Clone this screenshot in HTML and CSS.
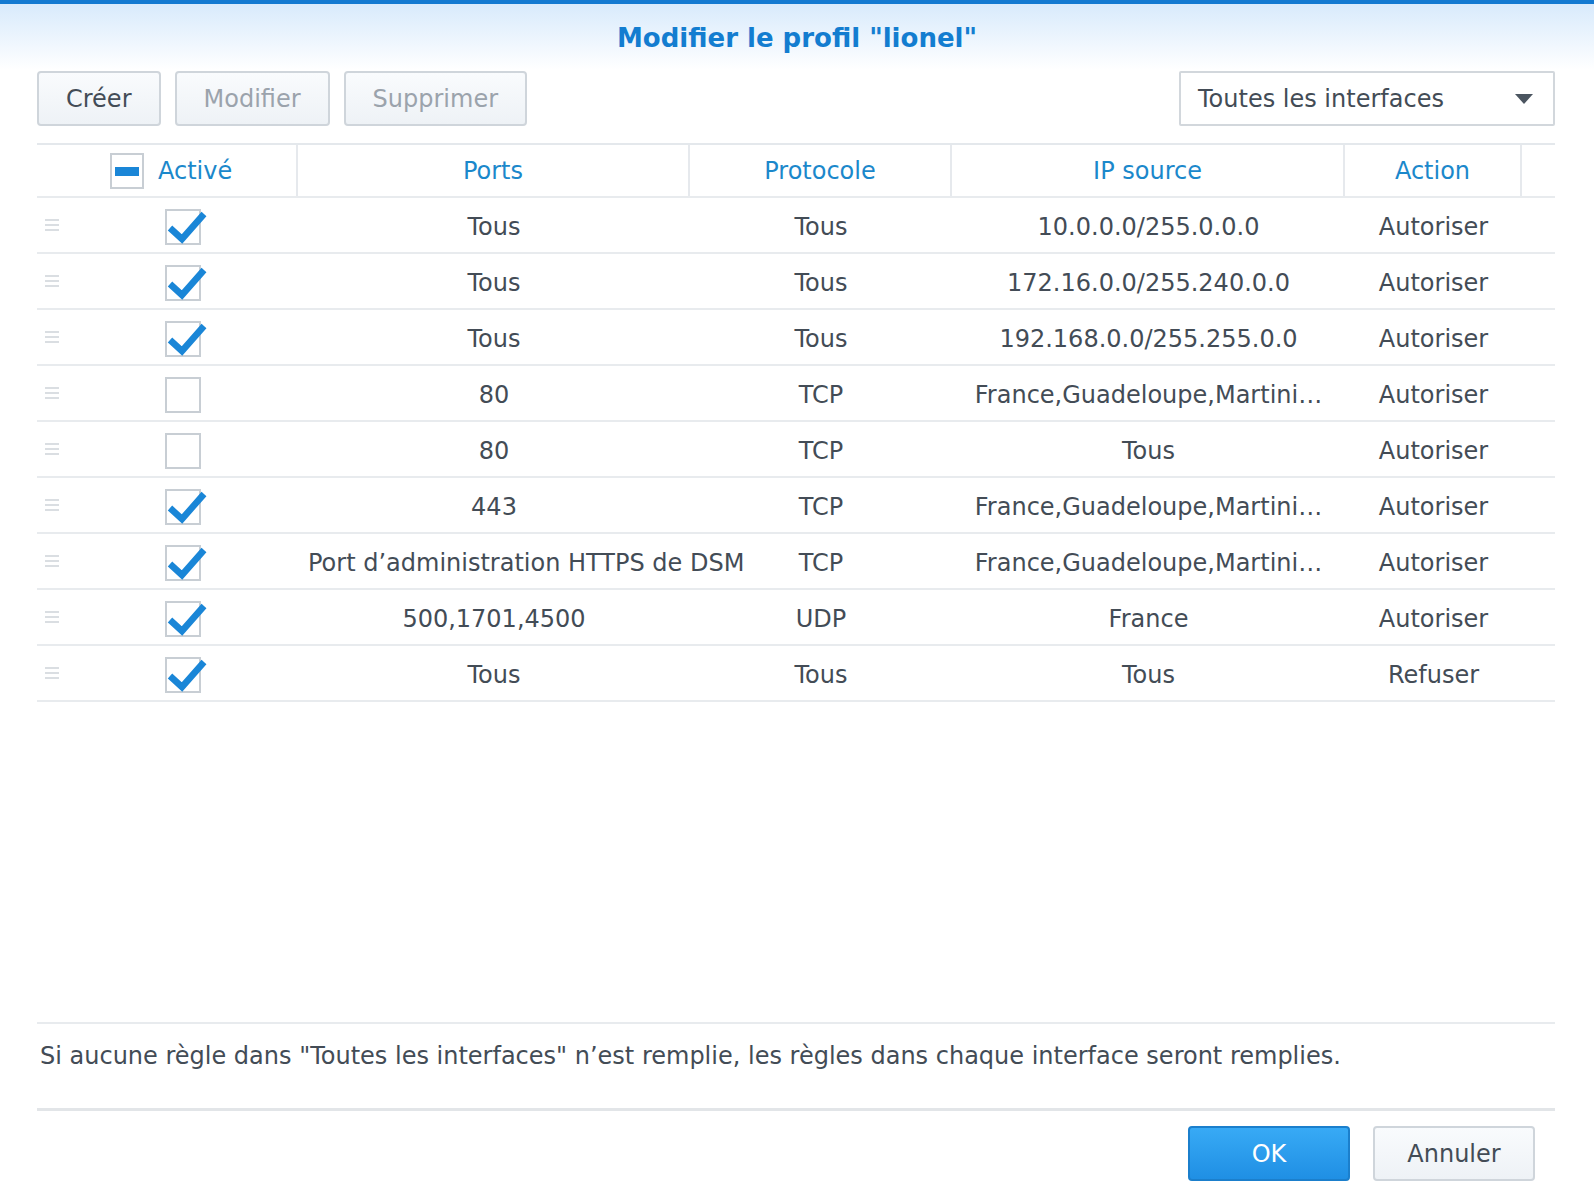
FILE: index.html
```html
<!DOCTYPE html>
<html lang="fr">
<head>
    <meta charset="UTF-8">
    <title>Modifier le profil</title>
    <link rel="stylesheet" href="styles.css">
</head>
<body>
<div class="dialog">
    <h1 class="title">Modifier le profil "lionel"</h1>

    <div class="toolbar">
        <div class="actions">
            <button class="btn">Créer</button>
            <button class="btn" disabled>Modifier</button>
            <button class="btn" disabled>Supprimer</button>
        </div>
        <div class="select">
            <span>Toutes les interfaces</span>
            <span class="arrow"></span>
        </div>
    </div>

    <div class="grid">
        <div class="row head">
            <div class="cell first"><span class="box partial"><span class="bar"></span></span>Activé</div>
            <div class="cell">Ports</div>
            <div class="cell">Protocole</div>
            <div class="cell">IP source</div>
            <div class="cell">Action</div>
            <div class="cell last"></div>
        </div>
        <div id="rows"></div>
    </div>

    <div class="spacer"></div>

    <div class="note">Si aucune règle dans "Toutes les interfaces" n’est remplie, les règles dans chaque interface seront remplies.</div>

    <div class="footer">
        <button class="btn primary">OK</button>
        <button class="btn">Annuler</button>
    </div>
</div>

<script>
const rules = [
    [true, 'Tous', 'Tous', '10.0.0.0/255.0.0.0', 'Autoriser'],
    [true, 'Tous', 'Tous', '172.16.0.0/255.240.0.0', 'Autoriser'],
    [true, 'Tous', 'Tous', '192.168.0.0/255.255.0.0', 'Autoriser'],
    [false, '80', 'TCP', 'France,Guadeloupe,Martini…', 'Autoriser'],
    [false, '80', 'TCP', 'Tous', 'Autoriser'],
    [true, '443', 'TCP', 'France,Guadeloupe,Martini…', 'Autoriser'],
    [true, 'Port d’administration HTTPS de DSM', 'TCP', 'France,Guadeloupe,Martini…', 'Autoriser'],
    [true, '500,1701,4500', 'UDP', 'France', 'Autoriser'],
    [true, 'Tous', 'Tous', 'Tous', 'Refuser']
];

const check = '<svg class="tick" viewBox="0 0 44 36" width="44" height="36"><polyline points="5,19 17,30 39,5" /></svg>';

let html = '';
rules.forEach(r => {
    html += '<div class="row">' +
        '<div class="cell first"><span class="handle"><i></i><i></i><i></i></span>' +
        '<span class="box">' + (r[0] ? check : '') + '</span></div>' +
        '<div class="cell">' + r[1] + '</div>' +
        '<div class="cell">' + r[2] + '</div>' +
        '<div class="cell">' + r[3] + '</div>' +
        '<div class="cell">' + r[4] + '</div>' +
        '<div class="cell last"></div>' +
        '</div>';
});
document.getElementById('rows').innerHTML = html;
</script>
</body>
</html>
```

FILE: styles.css
```css
body {
    margin: 0;
    font-family: "DejaVu Sans", Verdana, sans-serif;
    font-size: 24px;
    color: #434c56;
    background: #fff;
}
.dialog {
    height: 1192px;
    display: flex;
    flex-direction: column;
    border-top: 4px solid #1379d1;
    background: linear-gradient(to bottom, #d8eafc 0, #ffffff 66px) no-repeat;
}
.title {
    margin: 14px 0 0;
    height: 40px;
    line-height: 40px;
    text-align: center;
    font-size: 26px;
    font-weight: bold;
    color: #137dd0;
}
.toolbar {
    display: flex;
    justify-content: space-between;
    margin: 13px 39px 0 37px;
    height: 55px;
}
.actions {
    display: flex;
    gap: 14px;
}
.btn {
    font-family: inherit;
    font-size: 24px;
    color: #434c56;
    height: 55px;
    padding: 0 27px;
    border: 2px solid #cfd5db;
    border-radius: 4px;
    background: linear-gradient(to bottom, #f9fbfd, #eef2f6);
}
.btn:disabled {
    color: #9ba3ac;
}
.select {
    width: 376px;
    box-sizing: border-box;
    border: 2px solid #d2d7dc;
    border-radius: 2px;
    background: #fff;
    display: flex;
    align-items: center;
    justify-content: space-between;
    padding: 0 20px 0 17px;
}
.arrow {
    width: 0;
    height: 0;
    border-left: 9px solid transparent;
    border-right: 9px solid transparent;
    border-top: 10px solid #4b5560;
}

.grid {
    margin: 17px 39px 0 37px;
}
.row {
    display: grid;
    grid-template-columns: 261px 392px 262px 393px 177px 1fr;
    height: 56px;
    border-bottom: 2px solid #e8ebee;
    box-sizing: border-box;
}
.row.head {
    height: 55px;
    border-top: 2px solid #e4e8ec;
    color: #1b88cb;
}
.cell {
    display: flex;
    align-items: center;
    justify-content: safe center;
    white-space: nowrap;
    padding: 3px 10px 0;
    min-width: 0;
}
.head .cell {
    padding-top: 1px;
    border-right: 2px solid #e6e9ed;
}
.head .cell.last {
    border-right: none;
}
.cell.first {
    justify-content: flex-start;
    padding-right: 0;
    padding-left: 8px;
}
.head .cell.first {
    padding-left: 73px;
}
.box {
    position: relative;
    display: inline-block;
    width: 36px;
    height: 36px;
    box-sizing: border-box;
    border: 2px solid #c8ced4;
    background: #fff;
    margin-left: 106px;
}
.box.partial {
    width: 34px;
    height: 36px;
    margin: 0 14px 0 0;
}
.box .bar {
    position: absolute;
    left: 3px;
    top: 12px;
    width: 24px;
    height: 9px;
    background: #1a86d7;
}
.tick {
    position: absolute;
    left: -2px;
    top: -2px;
    overflow: visible;
}
.tick polyline {
    fill: none;
    stroke: #1a86d7;
    stroke-width: 6.5;
}
.handle {
    display: flex;
    flex-direction: column;
    gap: 3px;
    width: 14px;
    margin-top: -4px;
}
.handle i {
    display: block;
    height: 2px;
    background: #dadee2;
}

.spacer {
    flex: 1;
}
.note {
    margin: 0 39px 0 37px;
    border-top: 2px solid #e8ebee;
    padding: 19px 0 38px 3px;
    line-height: 27px;
}
.footer {
    margin: 0 39px 0 37px;
    border-top: 3px solid #e2e5e8;
    padding: 15px 20px 15px 0;
    display: flex;
    justify-content: flex-end;
    gap: 23px;
}
.footer .btn {
    width: 162px;
    padding: 0;
}
.btn.primary {
    color: #fff;
    border-color: #1b7fcc;
    background: linear-gradient(to bottom, #38aaf5, #1f8fe4);
}
```
